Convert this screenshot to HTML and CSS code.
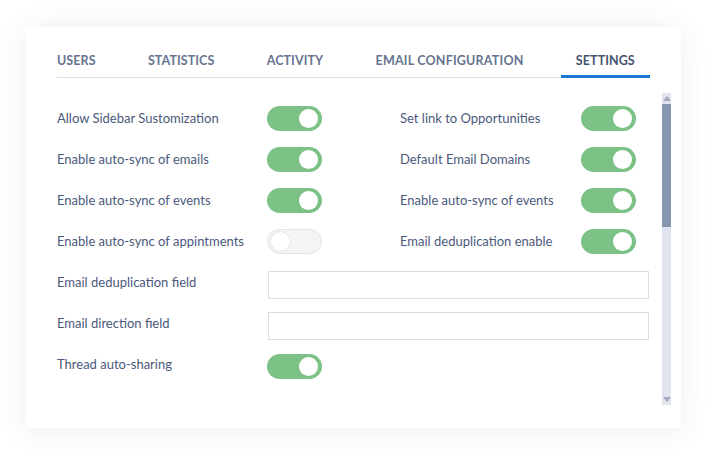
FILE: index.html
```html
<!DOCTYPE html>
<html>
<head>
<meta charset="utf-8">
<link rel="stylesheet" href="styles.css">
</head>
<body>
<div class="card">
  <nav class="tabs">
    <div class="tab">Users</div>
    <div class="tab">Statistics</div>
    <div class="tab">Activity</div>
    <div class="tab wide">Email configuration</div>
    <div class="tab active">Settings</div>
  </nav>
  <div class="body">
    <div class="settings">
      <div class="label">Allow Sidebar Sustomization</div>
      <div class="toggle on"><span class="knob"></span></div>
      <div class="spacer"></div>
      <div class="label">Set link to Opportunities</div>
      <div class="toggle on"><span class="knob"></span></div>

      <div class="label">Enable auto-sync of emails</div>
      <div class="toggle on"><span class="knob"></span></div>
      <div class="spacer"></div>
      <div class="label">Default Email Domains</div>
      <div class="toggle on"><span class="knob"></span></div>

      <div class="label">Enable auto-sync of events</div>
      <div class="toggle on"><span class="knob"></span></div>
      <div class="spacer"></div>
      <div class="label">Enable auto-sync of events</div>
      <div class="toggle on"><span class="knob"></span></div>

      <div class="label">Enable auto-sync of appintments</div>
      <div class="toggle off"><span class="knob"></span></div>
      <div class="spacer"></div>
      <div class="label">Email deduplication enable</div>
      <div class="toggle on"><span class="knob"></span></div>

      <div class="label">Email deduplication field</div>
      <div class="input"></div>

      <div class="label">Email direction field</div>
      <div class="input"></div>

      <div class="label">Thread auto-sharing</div>
      <div class="toggle on lower"><span class="knob"></span></div>
    </div>
    <div class="scrollbar">
      <div class="arrow up"></div>
      <div class="thumb"></div>
      <div class="rest"></div>
      <div class="arrow down"></div>
    </div>
  </div>
</div>
</body>
</html>
```
FILE: styles.css
```css
html, body {
  margin: 0;
  padding: 0;
  background: #ffffff;
}
body {
  width: 709px;
  height: 456px;
  overflow: hidden;
  font-family: Lato, "Open Sans", sans-serif;
  padding-top: 27px;
  box-sizing: border-box;
}
.card {
  margin-left: 26px;
  width: 655px;
  height: 401px;
  background: #ffffff;
  box-shadow: 0 2px 28px rgba(40, 50, 90, 0.09);
  padding: 26px 10px 0 31px;
  box-sizing: border-box;
}
.tabs {
  display: flex;
  gap: 22.3px;
  width: 592px;
  border-bottom: 1px solid #dcdde7;
}
.tab {
  flex-shrink: 0;
  white-space: nowrap;
  padding: 0 15px 8px;
  font-size: 12.5px;
  line-height: 16px;
  font-weight: 700;
  letter-spacing: 0.08px;
  text-transform: uppercase;
  color: #66748f;
}
.tab.wide {
  letter-spacing: 0.2px;
}
.tab:first-child {
  padding-left: 0;
}
.tab.active {
  color: #45556f;
  border-bottom: 3px solid #1777d3;
  margin-bottom: -1px;
  padding-bottom: 6px;
}
.body {
  display: flex;
  margin-top: 15px;
  gap: 14px;
}
.settings {
  width: 592px;
  height: 312px;
  padding-top: 5px;
  box-sizing: border-box;
  display: grid;
  grid-template-columns: 210px 55px 78px 181px 55px;
  grid-auto-rows: 41px;
  align-items: center;
}
.label {
  font-size: 13px;
  color: #4a597b;
  line-height: 16px;
  margin-top: -2px;
  white-space: nowrap;
}
.spacer {
  height: 1px;
}
.toggle {
  width: 55px;
  height: 25px;
  border-radius: 13px;
  box-sizing: border-box;
  display: flex;
  align-items: center;
  padding: 0 4px;
}
.toggle.on {
  background: #7cc287;
  justify-content: flex-end;
}
.toggle.off {
  background: #f4f4f7;
  border: 1px solid #e3e3ea;
  padding: 0 3px;
}
.toggle.lower {
  margin-top: 4px;
}
.knob {
  width: 19px;
  height: 19px;
  border-radius: 50%;
  background: #ffffff;
}
.toggle.off .knob {
  box-shadow: 0 0 0 1px #e6e6ec;
}
.input {
  grid-column: 2 / -1;
  justify-self: start;
  width: 381px;
  height: 28px;
  border: 1px solid #dcdce7;
  box-sizing: border-box;
  margin-left: 1px;
  margin-top: 4px;
}
.scrollbar {
  width: 9px;
  height: 312px;
  display: flex;
  flex-direction: column;
  background: #e1e4ee;
}
.arrow {
  height: 11px;
  display: flex;
  justify-content: center;
  align-items: center;
}
.arrow::before {
  content: "";
  width: 0;
  height: 0;
  border-left: 4px solid transparent;
  border-right: 4px solid transparent;
}
.arrow.up::before {
  border-bottom: 5px solid #a2aabe;
}
.arrow.down::before {
  border-top: 5px solid #a2aabe;
}
.thumb {
  height: 123px;
  background: #8796b0;
}
.rest {
  flex: 1;
}
```
